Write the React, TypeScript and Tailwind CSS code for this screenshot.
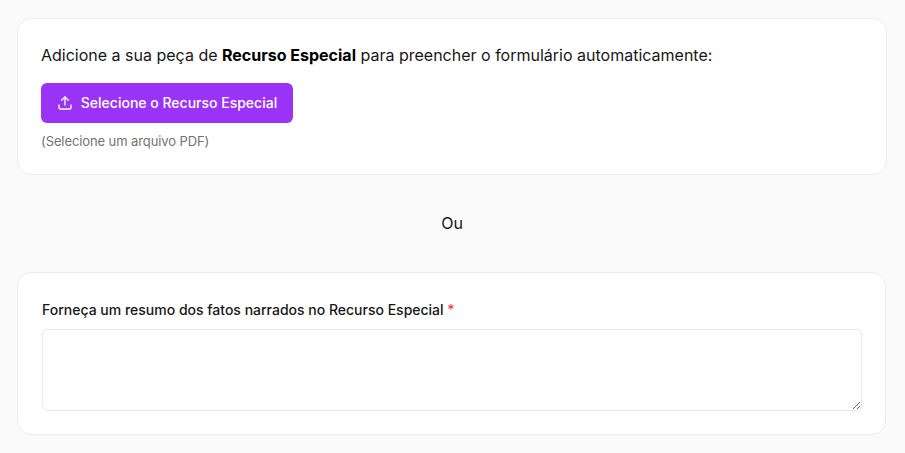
import { Upload } from "lucide-react";

export default function App() {
  return (
    <div className="min-h-[453px] bg-[#fafafa] pl-[17px] pr-[18px] pt-[18px] font-['Inter',sans-serif] text-[#0a0a0a] overflow-hidden">
      <div className="h-[157px] rounded-[14px] border border-[#ececec] bg-white px-[23px] pt-[24px]">
        <p className="text-base leading-6 text-[#171717]">
          Adicione a sua peça de <strong className="font-bold text-black">Recurso Especial</strong> para preencher o formulário automaticamente:
        </p>
        <button className="mt-4 flex h-10 w-[252px] items-center justify-center gap-2 rounded-md bg-[#9a33f5] text-sm font-medium text-white">
          <Upload size={16} strokeWidth={2} />
          Selecione o Recurso Especial
        </button>
        <p className="mt-[9px] text-[13px] leading-[18px] tracking-[-0.1px] text-[#737373]">(Selecione um arquivo PDF)</p>
      </div>
      <div className="flex h-[97px] items-center justify-center pb-[2px] text-base text-[#171717]">Ou</div>
      <div className="mr-px h-[163px] rounded-[14px] border border-[#ececec] bg-white pl-[24px] pr-[23px] pt-[27px]">
        <label className="block text-sm font-medium leading-5 text-[#171717]">
          Forneça um resumo dos fatos narrados no Recurso Especial <span className="text-[#ef4444]">*</span>
        </label>
        <textarea className="mt-[9px] block h-[82px] w-full rounded-md border border-[#e8e8e8] bg-white" />
      </div>
    </div>
  );
}
